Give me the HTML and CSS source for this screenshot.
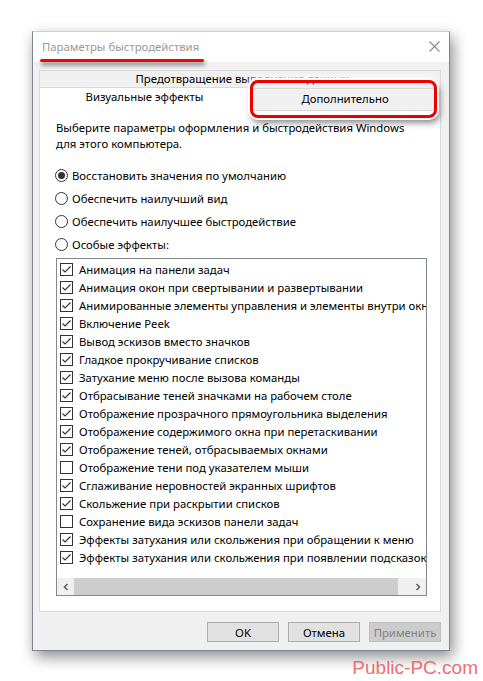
FILE: index.html
```html
<!DOCTYPE html>
<html lang="ru">
<head>
    <meta charset="UTF-8">
    <meta name="viewport" content="width=device-width, initial-scale=1.0">
    <title>Параметры быстродействия</title>
    <link rel="stylesheet" href="styles.css">
</head>
<body>
    <div class="page">
        <div class="window">
            <div class="titlebar">
                <span class="title">Параметры быстродействия</span>
                <svg class="close" width="11" height="11" viewBox="0 0 11 11"><path d="M0.5 0.5L10.5 10.5M10.5 0.5L0.5 10.5" stroke="#8a8a8a" stroke-width="1.1" fill="none"/></svg>
                <span class="mark-line"></span>
            </div>

            <div class="body">
                <div class="tabs">
                    <div class="tab-row back">
                        <div class="tab">Предотвращение выполнения данных</div>
                    </div>
                    <div class="tab-row front">
                        <div class="tab active">Визуальные эффекты</div>
                        <div class="tab">Дополнительно</div>
                    </div>
                    <span class="mark-box"></span>
                </div>

                <div class="panel">
                    <p class="intro">Выберите параметры оформления и быстродействия Windows<br>для этого компьютера.</p>

                    <div class="radios">
                        <label class="radio"><span class="dot checked"></span>Восстановить значения по умолчанию</label>
                        <label class="radio"><span class="dot"></span>Обеспечить наилучший вид</label>
                        <label class="radio"><span class="dot"></span>Обеспечить наилучшее быстродействие</label>
                        <label class="radio"><span class="dot"></span>Особые эффекты:</label>
                    </div>

                    <div class="listbox">
                        <ul class="items">
                            <li><span class="box on"></span>Анимация на панели задач</li>
                            <li><span class="box on"></span>Анимация окон при свертывании и развертывании</li>
                            <li><span class="box on"></span>Анимированные элементы управления и элементы внутри окна</li>
                            <li><span class="box on"></span>Включение Peek</li>
                            <li><span class="box on"></span>Вывод эскизов вместо значков</li>
                            <li><span class="box on"></span>Гладкое прокручивание списков</li>
                            <li><span class="box on"></span>Затухание меню после вызова команды</li>
                            <li><span class="box on"></span>Отбрасывание теней значками на рабочем столе</li>
                            <li><span class="box on"></span>Отображение прозрачного прямоугольника выделения</li>
                            <li><span class="box on"></span>Отображение содержимого окна при перетаскивании</li>
                            <li><span class="box on"></span>Отображение теней, отбрасываемых окнами</li>
                            <li><span class="box"></span>Отображение тени под указателем мыши</li>
                            <li><span class="box on"></span>Сглаживание неровностей экранных шрифтов</li>
                            <li><span class="box on"></span>Скольжение при раскрытии списков</li>
                            <li><span class="box"></span>Сохранение вида эскизов панели задач</li>
                            <li><span class="box on"></span>Эффекты затухания или скольжения при обращении к меню</li>
                            <li><span class="box on"></span>Эффекты затухания или скольжения при появлении подсказок</li>
                        </ul>
                        <div class="hscroll">
                            <span class="arrow"><svg width="8" height="8" viewBox="0 0 8 8"><path d="M5.5 1L2.5 4L5.5 7" stroke="#606060" stroke-width="1.6" fill="none"/></svg></span>
                            <span class="track"><span class="thumb"></span></span>
                            <span class="arrow"><svg width="8" height="8" viewBox="0 0 8 8"><path d="M2.5 1L5.5 4L2.5 7" stroke="#606060" stroke-width="1.6" fill="none"/></svg></span>
                        </div>
                    </div>
                </div>

                <div class="buttons">
                    <button class="btn">OK</button>
                    <button class="btn">Отмена</button>
                    <button class="btn" disabled>Применить</button>
                </div>
            </div>
        </div>
        <div class="watermark">Public-PC.com</div>
    </div>
</body>
</html>
```

FILE: styles.css
```css
/* Basic styling */
* { box-sizing: border-box; margin: 0; padding: 0; }
body { font-family: "Noto Sans", Arial, sans-serif; font-size: 11.35px; color: #000; background: #fff; }
.page { padding: 31px 5px 0 32px; }

/* Dialog window */
.window { width: 418px; border: 1px solid #7a8793; border-top-color: #cfcfcf; background: #f0f0f0; box-shadow: 3px 6px 14px rgba(0, 0, 0, 0.45); }
.titlebar { position: relative; height: 30px; background: #fff; display: flex; align-items: center; justify-content: space-between; padding: 0 9px 2px 9px; }
.title { color: #999; }
.close { display: block; }
.mark-line { position: absolute; left: 7px; top: 27px; width: 164px; height: 3px; border-radius: 2px; background: #e8070a; box-shadow: 1px 3px 4px rgba(0, 0, 0, 0.55); }

.body { padding: 8px 8px 8px 6px; }

/* Tabs */
.tabs { position: relative; }
.tab-row { display: flex; }
.tab-row.back { height: 17px; }
.tab-row.back .tab { flex: 1; border: 1px solid #d9d9d9; border-bottom: none; background: #f0f0f0; text-align: center; line-height: 16px; padding-left: 4px; }
.tab-row.front { height: 23px; align-items: flex-end; }
.tab-row.front .tab { height: 22px; line-height: 20px; text-align: center; border: 1px solid #d9d9d9; border-bottom: none; background: #f0f0f0; }
.tab-row.front .tab.active { width: 211px; height: 24px; line-height: 18px; background: #fff; position: relative; top: 1px; z-index: 1; }
.tab-row.front .tab:last-child { flex: 1; border-left: none; }
.mark-box { position: absolute; left: 211px; top: 10px; width: 187px; height: 38px; border: 3px solid #e00; border-radius: 8px; box-shadow: 0 0 0 2px #fff, 2px 4px 6px 1px rgba(0, 0, 0, 0.45), 0 -1px 4px 3px rgba(255, 255, 255, 0.85); z-index: 2; }

/* Tab page */
.panel { background: #fff; border: 1px solid #d9d9d9; padding: 9px 13px 15px 16px; }
.intro { line-height: 15.5px; }
.radios { margin-top: 13px; margin-bottom: 2px; }
.radio { display: flex; align-items: center; height: 23px; }
.dot { width: 13px; height: 13px; border: 1px solid #333; border-radius: 50%; margin: 0 4px 0 -1px; display: flex; align-items: center; justify-content: center; background: #fff; }
.dot.checked::after { content: ""; width: 7px; height: 7px; border-radius: 50%; background: #333; }

/* List with checkboxes */
.listbox { height: 338px; border: 1px solid #828790; background: #fff; display: flex; flex-direction: column; }
.items { list-style: none; flex: 1; overflow: hidden; padding-top: 1px; }
.items li { height: 18px; display: flex; align-items: center; white-space: nowrap; padding-left: 3px; }
.box { flex: none; width: 13px; height: 13px; border: 1px solid #333; margin-right: 6px; background: #fff no-repeat center; }
.box.on { background-image: url("data:image/svg+xml;utf8,<svg xmlns='http://www.w3.org/2000/svg' width='11' height='11' viewBox='0 0 11 11'><path d='M1.5 5.5L4 8L9.5 2.5' stroke='%23333' stroke-width='1.1' fill='none'/></svg>"); }

.hscroll { height: 17px; display: flex; background: #f0f0f0; }
.arrow { width: 17px; display: flex; align-items: center; justify-content: center; }
.track { flex: 1; display: flex; align-items: center; }
.thumb { width: 324px; height: 17px; background: #cdcdcd; }

/* Buttons */
.buttons { display: flex; justify-content: flex-end; gap: 9px; margin-top: 10px; }
.btn { width: 72px; height: 20px; font-family: inherit; font-size: 11.35px; color: #000; background: #e1e1e1; border: 1px solid #adadad; }
.btn:disabled { background: #cccccc; border-color: #bfbfbf; color: #838383; }

.watermark { text-align: right; margin-top: 6px; font-family: "Liberation Sans", Arial, sans-serif; font-size: 19px; color: #ea6f73; }
```
